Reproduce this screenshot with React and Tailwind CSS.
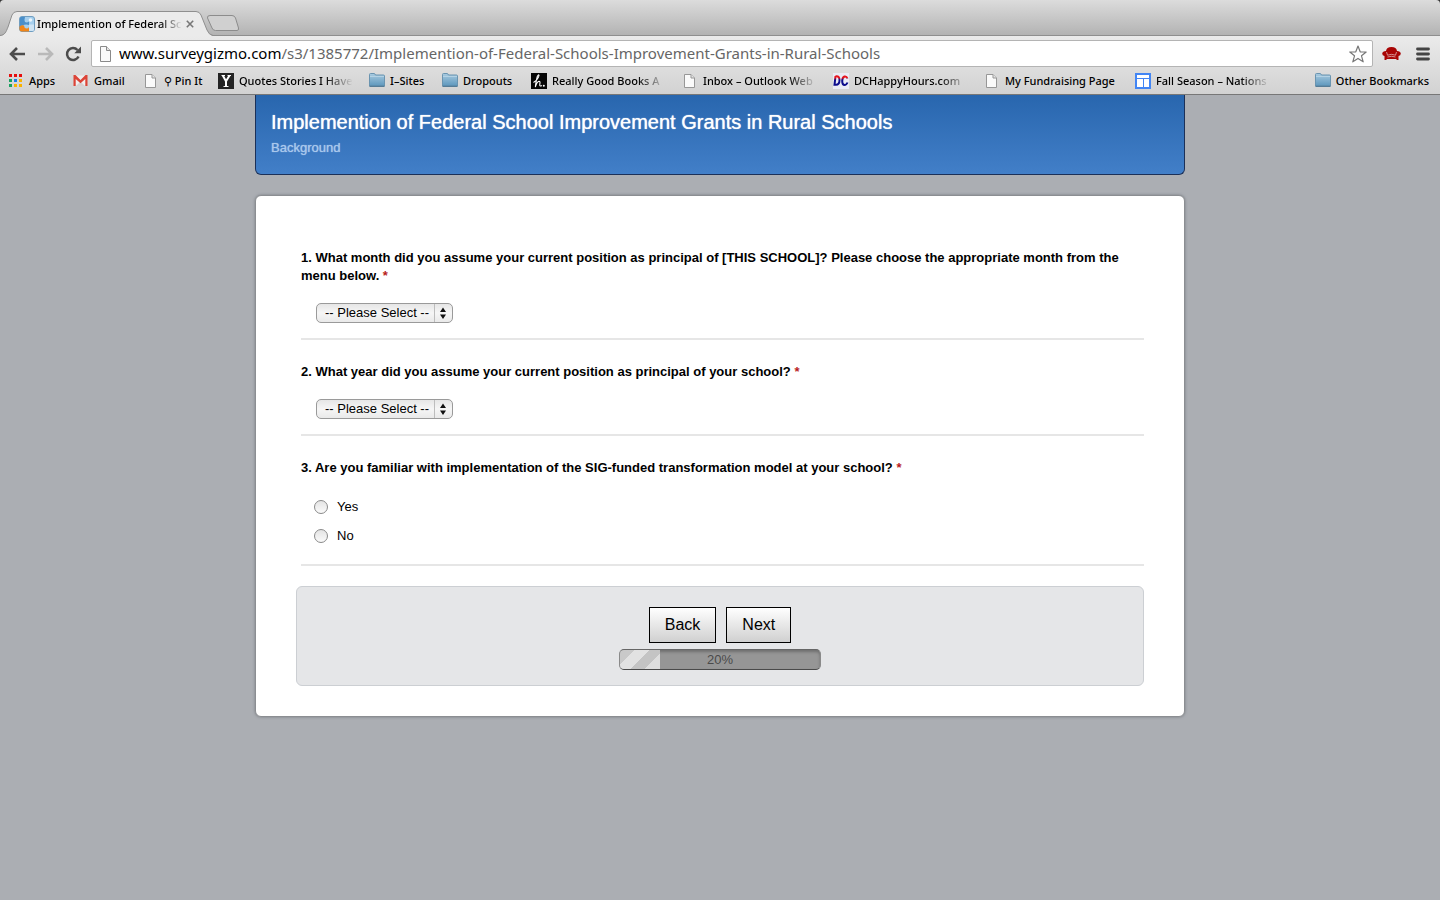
import { useState } from "react";

function PageIcon() {
  return (
    <svg width="16" height="16" viewBox="0 0 16 16" aria-hidden="true">
      <path d="M2.500 1.500h6.500L12.500 5V14.500H2.500z" fill="#fafafa" stroke="#979797" />
      <path d="M9 1.500V5H12.500" fill="#e4e4e4" stroke="#979797" />
    </svg>
  );
}

function FolderIcon() {
  return (
    <svg width="16" height="16" viewBox="0 0 16 16" aria-hidden="true">
      <defs>
        <linearGradient id="folder" x1="0" y1="0" x2="0" y2="1">
          <stop offset="0" stopColor="#a9cbe0" />
          <stop offset="1" stopColor="#5d97bd" />
        </linearGradient>
      </defs>
      <path d="M.5 13V1.500Q.5 .5 1.500 .5H5Q6 .5 6.500 2H14.500Q15.500 2 15.500 3V13z" fill="url(#folder)" stroke="#6a94b0" />
      <path d="M1 3.500H15" stroke="#b4d2e4" />
      <path d="M.5 13.300H15.500" stroke="#436e8c" />
    </svg>
  );
}

function AppsIcon() {
  const colors = ["#e60f0f", "#e60f0f", "#e60f0f", "#1ba160", "#1a80e8", "#f9b200", "#1ba160", "#f9b200", "#f9b200"];
  return (
    <svg width="16" height="16" viewBox="0 0 16 16" aria-hidden="true">
      {colors.map((c, i) => (
        <rect key={i} x={1 + (i % 3) * 5} y={1 + Math.floor(i / 3) * 5} width="3" height="3" fill={c} />
      ))}
    </svg>
  );
}

function GmailIcon() {
  return (
    <svg width="16" height="16" viewBox="0 0 16 16" aria-hidden="true">
      <path d="M1 2.500H14V13H1z" fill="#f1eeee" />
      <path d="M3 13L7.500 8.500L12 13z" fill="#d5cfcf" />
      <path d="M.5 2H2.500L7.500 7L12.500 2H14.500V13H12.300V5.900L7.500 10.300L2.700 5.900V13H.5z" fill="#dc4437" />
    </svg>
  );
}

function YIcon() {
  return (
    <svg width="16" height="16" viewBox="0 0 16 16" aria-hidden="true">
      <rect width="16" height="16" fill="#242424" />
      <path d="M3.500 2.500H7M9.500 2.500H13M5.500 13.500H10.500" stroke="#fff" strokeWidth="1.200" />
      <path d="M4.800 2.500L8 8.300V13.500M11.500 2.500L8 8.300" fill="none" stroke="#fff" strokeWidth="2" />
    </svg>
  );
}

function ScriptIcon() {
  return (
    <svg width="16" height="16" viewBox="0 0 16 16" aria-hidden="true">
      <rect width="16" height="16" fill="#050505" />
      <path d="M2.500 9.500Q7.500 6 8 2.500Q7.500 .8 6.300 3.500Q5 8 4.300 14Q6 8.500 8 8.200Q9.500 8.200 8.800 11Q8.300 14 10.800 12.500" fill="none" stroke="#fff" strokeWidth="1.100" />
      <circle cx="12.800" cy="12.800" r="1" fill="#fff" />
    </svg>
  );
}

function DcIcon() {
  return (
    <svg width="16" height="16" viewBox="0 0 16 16" aria-hidden="true">
      <defs>
        <linearGradient id="dc" x1="0" y1="2" x2="0" y2="13" gradientUnits="userSpaceOnUse">
          <stop offset=".25" stopColor="#e8141c" />
          <stop offset=".45" stopColor="#0c0c8c" />
        </linearGradient>
      </defs>
      <rect width="16" height="16" fill="#e9ebf5" />
      <path d="M2.500 3.200H3.500Q6.500 3.200 6.500 7Q6.500 11.800 3 11.800H1.500L2.500 3.200" fill="none" stroke="url(#dc)" strokeWidth="2" />
      <path d="M14.500 5.500Q13.500 3 11.500 3.500Q9.200 4.500 9.200 8Q9.200 12 11.500 12Q13.500 12 14.500 9.500" fill="none" stroke="url(#dc)" strokeWidth="2" />
    </svg>
  );
}

function LayoutIcon() {
  return (
    <svg width="16" height="16" viewBox="0 0 16 16" aria-hidden="true">
      <rect width="16" height="16" fill="#4285f4" />
      <path d="M2 2H14V5H2zM2 6H8V14H2zM9 6H14V14H9z" fill="#fff" />
    </svg>
  );
}

const bookmarks = [
  { label: "Apps", icon: AppsIcon, width: "w-[49px]" },
  { label: "Gmail", icon: GmailIcon, width: "w-[54px]" },
  { label: "⚲ Pin It", icon: PageIcon, width: "w-[59px]" },
  { label: "Quotes Stories I Have", icon: YIcon, width: "w-[135px]", fade: true },
  { label: "I–Sites", icon: FolderIcon, width: "w-[57px]" },
  { label: "Dropouts", icon: FolderIcon, width: "w-[73px]" },
  { label: "Really Good Books A", icon: ScriptIcon, width: "w-[135px]", fade: true },
  { label: "Inbox – Outlook Web", icon: PageIcon, width: "w-[135px]", fade: true },
  { label: "DCHappyHours.com", icon: DcIcon, width: "w-[135px]", fade: true },
  { label: "My Fundraising Page", icon: PageIcon, width: "w-[135px]" },
  { label: "Fall Season – Nations", icon: LayoutIcon, width: "w-[135px]", fade: true },
];

function Bookmark({ label, icon: Icon, width, fade }) {
  return (
    <a href="#" className={`flex shrink-0 items-center gap-[5px] ${width}`}>
      <span className="shrink-0">
        <Icon />
      </span>
      <span
        className={`min-w-0 flex-1 whitespace-nowrap ${
          fade ? "overflow-hidden mask-r-from-75% mask-r-to-100%" : ""
        }`}
      >
        {label}
      </span>
    </a>
  );
}

function TabStrip() {
  return (
    <div className="flex h-9 items-end rounded-t-[4px] bg-linear-to-b from-[#dcdcdc] to-[#b2b2b2] inset-shadow-[0_-1px_0_#8f8f8f]">
      <div className="relative flex h-[25px] w-[213px] items-center pl-[19px]">
        <svg className="absolute inset-0" width="213" height="25" viewBox="0 0 213 25" aria-hidden="true">
          <path d="M0 25C5 24 6 21 8 16L12 4Q13.500 .5 17 .5H196Q199.500 .5 201 4L207 19Q209 24 213 25z" fill="#ebebeb" />
          <path d="M0 24.500C5 24 6 21 8 16L12 4Q13.500 .5 17 .5H196Q199.500 .5 201 4L207 19Q209 24 213 24.500" fill="none" stroke="#8f8f8f" />
        </svg>
        <svg className="relative shrink-0" width="16" height="16" viewBox="0 0 16 16" aria-hidden="true">
          <rect x=".5" y=".5" width="15" height="15" rx="2.500" fill="#a5cfee" stroke="#6f9dc0" />
          <path d="M1 2Q1 1 2 1H6Q5 4 6 6Q8 7 10 5.500V9Q6 8 4 9.500L1 10z" fill="#4a8fca" />
          <circle cx="11.500" cy="4" r="1.800" fill="#eaf5fc" />
          <path d="M.5 10.500Q3 8.500 5 9.500Q5 12 7.500 12.500Q9.500 12.500 10 11V15.500H3Q.5 15.500 .5 13z" fill="#f0861a" />
          <path d="M10 8.500H15V13.500Q15 15 13.500 15H10z" fill="#cfe4f4" />
        </svg>
        <span className="relative ml-[2px] w-[145px] overflow-hidden text-[11px] leading-4 font-medium whitespace-nowrap text-black mask-r-from-85% mask-r-to-100%">
          Implemention of Federal Sc
        </span>
        <button type="button" aria-label="Close tab" className="relative ml-1">
          <svg width="8" height="8" viewBox="0 0 8 8">
            <path d="M.8 .8L7.200 7.200M7.200 .8L.8 7.200" stroke="#777" strokeWidth="1.600" />
          </svg>
        </button>
      </div>
      <button type="button" aria-label="New tab" className="mb-1 -ml-[7px]">
        <svg width="34" height="17" viewBox="0 0 34 17">
          <path d="M4 .5H26Q28.500 .5 29.500 3L32.500 13Q33 15.500 31 15.500H9.500Q7 15.500 6 13L1.500 3Q1 .5 4 .5z" fill="#d0d0d0" stroke="#8c8c8c" />
        </svg>
      </button>
    </div>
  );
}

function Browser() {
  return (
    <header className="border-b border-[#777] bg-linear-to-b from-[#ebebeb] to-[#d2d2d2] font-['Noto_Sans',sans-serif] text-black">
      <div className="bg-[#333]">
        <TabStrip />
      </div>
      <div className="bg-linear-to-b from-[#ebebeb] to-[#d2d2d2]">
        <div className="flex h-[31px] items-center pt-1 pr-[10px] pl-[9px]">
          <button type="button" aria-label="Back">
            <svg width="17" height="14" viewBox="0 0 17 14">
              <path d="M16 7H2.500M8 1L2 7L8 13" fill="none" stroke="#4c4c4c" strokeWidth="2.600" />
            </svg>
          </button>
          <button type="button" aria-label="Forward" className="ml-3">
            <svg width="17" height="14" viewBox="0 0 17 14">
              <path d="M0 7H13.500M8 1L14 7L8 13" fill="none" stroke="#b9b9b9" strokeWidth="2.600" />
            </svg>
          </button>
          <button type="button" aria-label="Reload" className="ml-[10px]">
            <svg width="17" height="16" viewBox="0 0 17 16">
              <path d="M13.500 10.500A6 6 0 1 1 12.500 4" fill="none" stroke="#4c4c4c" strokeWidth="2.500" />
              <path d="M16 .5V7.200H9.300z" fill="#4c4c4c" />
            </svg>
          </button>
          <div className="ml-[9px] flex h-[27px] min-w-0 flex-1 items-center rounded-xs border border-[#b4b4b4] bg-white px-[5px]">
            <svg width="16" height="16" viewBox="0 0 16 16" aria-hidden="true">
              <path d="M3.500 .5h6L13.500 4.500V15.500H3.500z" fill="#fafafa" stroke="#8a8a8a" />
              <path d="M9.500 .5V4.500H13.500" fill="#e4e4e4" stroke="#8a8a8a" />
            </svg>
            <div className="ml-[6px] min-w-0 flex-1 overflow-hidden pb-0.5 text-[15px] leading-5 whitespace-nowrap text-[#666]">
              <span className="text-black">www.surveygizmo.com</span>
              /s3/1385772/Implemention-of-Federal-Schools-Improvement-Grants-in-Rural-Schools
            </div>
            <button type="button" aria-label="Bookmark this page">
              <svg width="18" height="18" viewBox="0 0 18 18">
                <path d="M9 1L11.200 6.800L17.200 7L12.500 10.800L14.200 16.800L9 13.400L3.800 16.800L5.500 10.800L.8 7L6.800 6.800z" fill="#fff" stroke="#777" strokeWidth="1.200" strokeLinejoin="round" />
              </svg>
            </button>
          </div>
          <button type="button" aria-label="Extension" className="ml-[9px]">
            <svg width="19" height="16" viewBox="0 0 19 16">
              <path d="M4 5Q4.500 1 9.500 1Q14.500 1 15 5Q18.500 5 18.800 7.500Q18.800 9.500 16.500 10V14H14.500V13H4.500V14H2.500V10Q.2 9.500 .2 7.500Q.5 5 4 5z" fill="#a80505" />
              <path d="M4.500 6L5.500 9.200Q9.500 7.500 13.500 9.200L14.500 6M5.500 11Q9.500 9.500 13.500 11" fill="none" stroke="#e4b4b4" strokeWidth=".8" />
            </svg>
          </button>
          <button type="button" aria-label="Menu" className="ml-[15px]">
            <svg width="14" height="14" viewBox="0 0 14 14">
              <path d="M1.500 2H12.500M1.500 7H12.500M1.500 12H12.500" stroke="#444" strokeWidth="2.800" strokeLinecap="round" />
            </svg>
          </button>
        </div>
        <nav aria-label="Bookmarks" className="flex h-[27px] items-center gap-4 pr-[11px] pl-2 text-[11px] leading-4 font-medium">
          {bookmarks.map((b) => (
            <Bookmark key={b.label} {...b} />
          ))}
          <a href="#" className="ml-auto flex shrink-0 items-center gap-[5px] whitespace-nowrap">
            <FolderIcon />
            Other Bookmarks
          </a>
        </nav>
      </div>
    </header>
  );
}

function SelectQuestion({ id, text, options }) {
  return (
    <div className="border-b-2 border-[#e6e6e6] pb-[15px]">
      <label htmlFor={id} className="block text-[13px] leading-[18px] font-bold">
        {text}
        <span className="text-[#b91c1c]"> *</span>
      </label>
      <div className="relative mt-[18px] ml-[15px] w-[137px]">
        <select
          id={id}
          defaultValue=""
          className="block h-5 w-full appearance-none rounded-[5px] border border-[#9a9a9a] bg-linear-to-b from-[#e6e6e6] via-[#f6f6f6] to-[#e9e9e9] pl-2 text-[13px] leading-4"
        >
          <option value="">-- Please Select --</option>
          {options.map((o) => (
            <option key={o}>{o}</option>
          ))}
        </select>
        <svg className="pointer-events-none absolute top-px right-px" width="18" height="18" viewBox="0 0 18 18" aria-hidden="true">
          <path d="M.5 0V18" stroke="#bdbdbd" />
          <path d="M6 8L9 3.500L12 8zM6 10.500L9 15L12 10.500z" fill="#111" />
        </svg>
      </div>
    </div>
  );
}

const months = ["January", "February", "March", "April", "May", "June", "July", "August", "September", "October", "November", "December"];
const years = ["2013", "2012", "2011", "2010", "2009"];

export default function App() {
  const [answer, setAnswer] = useState("");
  return (
    <div className="min-h-screen bg-[#abaeb3] font-['Liberation_Sans',Arial,sans-serif] text-black">
      <Browser />
      <main className="mx-auto w-full max-w-[930px]">
        <div className="rounded-b-md border border-t-0 border-[#1b3058] bg-linear-to-b from-[#2866ae] to-[#427fc8] px-[15px] pt-[15px] pb-[17px]">
          <h1 className="text-xl leading-6 text-white text-shadow-[0_0_1px_#ffffff]">
            Implemention of Federal School Improvement Grants in Rural Schools
          </h1>
          <h2 className="mt-[5px] text-[13px] leading-[18px] text-[#a9c8ec] text-shadow-[0_0_1px_#a9c8ec]">Background</h2>
        </div>
        <form
          onSubmit={(e) => e.preventDefault()}
          className="mt-5 rounded-md border border-[#8b8e92] bg-white px-10 pt-[53px] pb-[30px] shadow-[0_0_3px_#777b80]"
        >
          <div className="flex flex-col gap-[23px] pl-[5px]">
            <SelectQuestion
              id="month"
              text="1. What month did you assume your current position as principal of [THIS SCHOOL]? Please choose the appropriate month from the menu below."
              options={months}
            />
            <SelectQuestion
              id="year"
              text="2. What year did you assume your current position as principal of your school?"
              options={years}
            />
            <fieldset className="border-b-2 border-[#e6e6e6] pb-[14px]">
              <legend className="text-[13px] leading-[18px] font-bold">
                3. Are you familiar with implementation of the SIG-funded transformation model at your school?
                <span className="text-[#b91c1c]"> *</span>
              </legend>
              <div className="mt-[15px] ml-[13px]">
                {["Yes", "No"].map((o) => (
                  <label key={o} className="flex h-[29px] items-center gap-[9px] text-[13px] leading-4">
                    <input
                      type="radio"
                      name="familiar"
                      checked={answer === o}
                      onChange={() => setAnswer(o)}
                      className="size-[14px] appearance-none rounded-full border border-[#8a8a8a] bg-linear-to-b from-[#e4e4e4] to-[#fafafa] checked:border-4 checked:border-[#333]"
                    />
                    {o}
                  </label>
                ))}
              </div>
            </fieldset>
          </div>
          <div className="mt-5 flex flex-col items-center rounded-md border border-[#cccfd3] bg-[#e5e6e8] pt-5 pb-[15px]">
            <div className="flex gap-[10px]">
              <button type="button" className="h-9 border border-black bg-linear-to-b from-white to-[#d0d0d0] px-[15px] text-base">
                Back
              </button>
              <button type="submit" className="h-9 border border-black bg-linear-to-b from-white to-[#d0d0d0] px-[15px] text-base">
                Next
              </button>
            </div>
            <div
              role="progressbar"
              aria-label="Survey progress"
              aria-valuenow={20}
              className="relative mt-[6px] h-[21px] w-[202px] overflow-hidden rounded-[5px] border border-x-[#8a8a8a] border-t-[#666] border-b-[#4a4a4a] bg-[#969696] text-center text-[13px] leading-[19px] text-[#4a4a4a] inset-shadow-[0_2px_3px_#6f6f6f]"
            >
              <div className="absolute inset-y-0 left-0 w-1/5 bg-[repeating-linear-gradient(135deg,#c9c9c9_0px,#c9c9c9_10px,#e2e2e2_10px,#e2e2e2_21px,#c4c4c4_21px,#c4c4c4_31px,#dedede_31px,#dedede_42px)]" />
              20%
            </div>
          </div>
        </form>
      </main>
    </div>
  );
}
